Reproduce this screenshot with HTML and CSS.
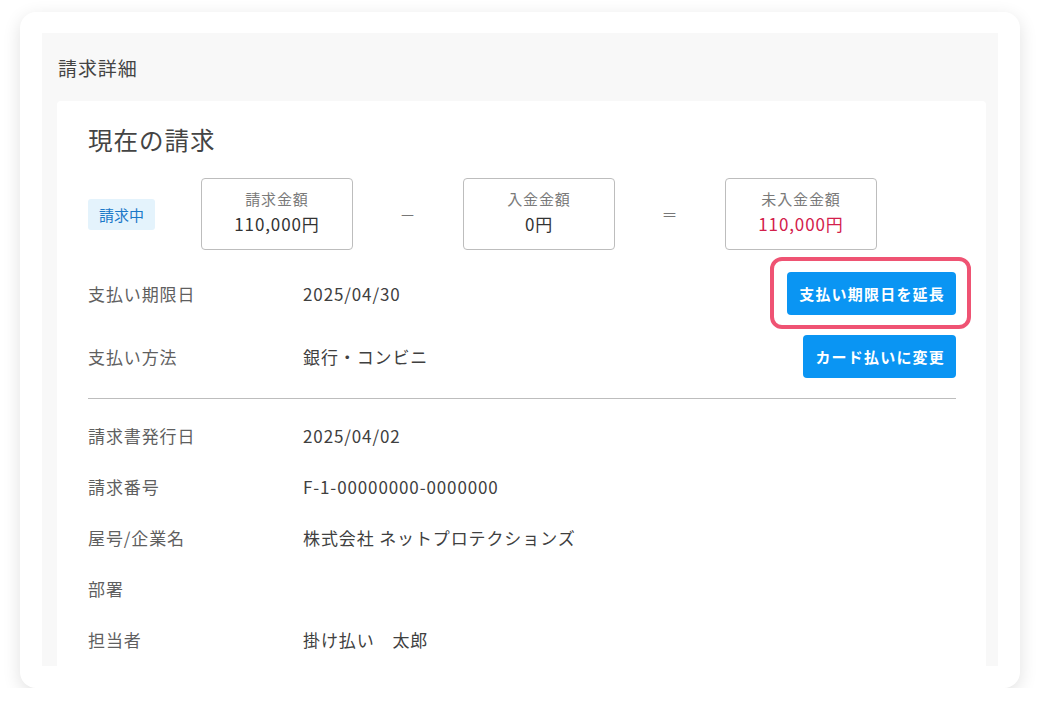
FILE: index.html
```html
<!DOCTYPE html>
<html lang="ja">
<head>
<meta charset="utf-8">
<title>請求詳細</title>
<link rel="stylesheet" href="styles.css">
</head>
<body>
<div class="frame">
  <div class="panel">
    <h1 class="panel-title">請求詳細</h1>
    <section class="card">
      <h2 class="card-title">現在の請求</h2>
      <div class="summary">
        <span class="badge">請求中</span>
        <div class="amount">
          <div class="amount-label">請求金額</div>
          <div class="amount-value">110,000円</div>
        </div>
        <div class="op">－</div>
        <div class="amount">
          <div class="amount-label">入金金額</div>
          <div class="amount-value">0円</div>
        </div>
        <div class="op">＝</div>
        <div class="amount">
          <div class="amount-label">未入金金額</div>
          <div class="amount-value due">110,000円</div>
        </div>
      </div>
      <div class="action-row first">
        <div class="label">支払い期限日</div>
        <div class="value">2025/04/30</div>
        <span class="highlight"><button class="btn">支払い期限日を延長</button></span>
      </div>
      <div class="action-row">
        <div class="label">支払い方法</div>
        <div class="value">銀行・コンビニ</div>
        <button class="btn">カード払いに変更</button>
      </div>
      <hr class="divider">
      <div class="list">
        <div class="row"><div class="label">請求書発行日</div><div class="value">2025/04/02</div></div>
        <div class="row"><div class="label">請求番号</div><div class="value">F-1-00000000-0000000</div></div>
        <div class="row"><div class="label">屋号/企業名</div><div class="value">株式会社 ネットプロテクションズ</div></div>
        <div class="row"><div class="label">部署</div><div class="value"></div></div>
        <div class="row"><div class="label">担当者</div><div class="value">掛け払い　太郎</div></div>
      </div>
    </section>
  </div>
</div>
</body>
</html>
```

FILE: styles.css
```css
* { box-sizing: border-box; }
html, body {
  margin: 0;
  padding: 0;
  background: #ffffff;
}
body {
  font-family: "Noto Sans CJK JP", "Noto Sans", sans-serif;
  color: #333333;
  letter-spacing: 0.055em;
}
.frame {
  margin: 12px 20px 0 20px;
  height: 676px;
  background: #ffffff;
  border-radius: 16px;
  box-shadow: 0 5px 18px rgba(0, 0, 0, 0.12);
  padding: 21px 22px 22px 22px;
}
.panel {
  height: 100%;
  overflow: hidden;
  background: #f8f8f8;
  padding: 24px 12px 0 15px;
}
.panel-title {
  margin: 0 0 22px 1px;
  font-size: 19px;
  line-height: 22px;
  font-weight: 400;
  color: #444444;
}
.card {
  background: #ffffff;
  border-radius: 4px;
  padding: 22px 30px 60px 31px;
}
.card-title {
  margin: 0 0 21px 0;
  font-size: 24.5px;
  line-height: 34px;
  font-weight: 400;
  color: #444444;
  letter-spacing: 0.04em;
}
.summary {
  display: flex;
  align-items: center;
  height: 72px;
}
.badge {
  display: inline-block;
  width: 67px;
  height: 31px;
  line-height: 31px;
  text-align: center;
  font-size: 15px;
  color: #1a78c8;
  background: #e4f3fc;
  border-radius: 3px;
  letter-spacing: 0;
  margin-right: 46px;
}
.amount {
  width: 152px;
  height: 72px;
  border: 1px solid #bdbdbd;
  border-radius: 4px;
  text-align: center;
  padding-top: 9px;
}
.amount-label {
  font-size: 15px;
  line-height: 22px;
  color: #7a7a7a;
}
.amount-value {
  font-size: 17px;
  line-height: 28px;
  color: #333333;
}
.amount-value.due { color: #d3204b; }
.op {
  width: 110px;
  text-align: center;
  font-size: 16px;
  color: #777777;
}
.action-row {
  display: flex;
  align-items: center;
  min-height: 43px;
  margin-top: 20px;
}
.action-row.first { margin-top: 22px; }
.label {
  width: 215px;
  flex: none;
  font-size: 17px;
  color: #5f5f5f;
}
.value {
  flex: 1;
  font-size: 17px;
  color: #404040;
}
.btn {
  font-family: inherit;
  height: 43px;
  padding: 0 11px 0 12px;
  border: none;
  border-radius: 4px;
  background: #0a95f3;
  color: #ffffff;
  font-size: 15px;
  font-weight: 700;
  letter-spacing: 0.08em;
}
.highlight {
  display: inline-flex;
  margin: -15px -15px -14px -17px;
  padding: 11px 11px 10px 13px;
  border: 4px solid #ef5373;
  border-radius: 12px;
}
.divider {
  margin: 20px 0 0 0;
  border: none;
  border-top: 1px solid #bdbdbd;
  height: 0;
}
.list { padding-top: 11px; }
.row {
  display: flex;
  align-items: center;
  height: 51px;
}
```
